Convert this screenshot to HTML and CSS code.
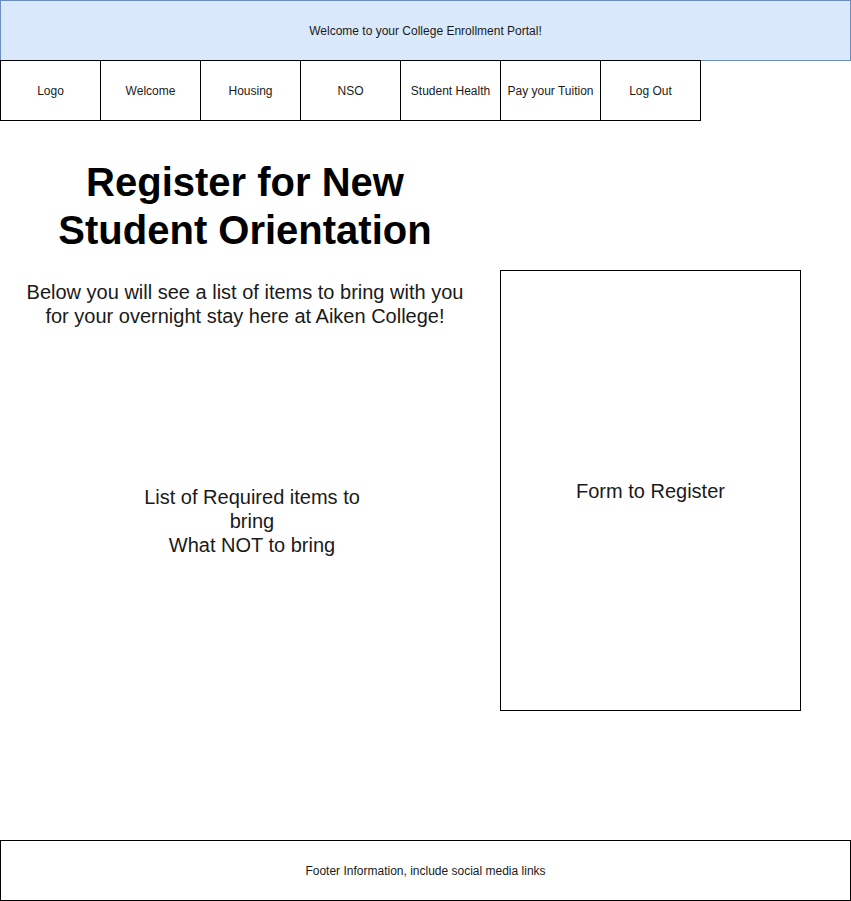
FILE: index.html
```html
<!DOCTYPE html>
<html lang="en">
<head>
<meta charset="utf-8">
<title>College Enrollment Portal</title>
<link rel="stylesheet" href="styles.css">
</head>
<body>
<header class="banner">Welcome to your College Enrollment Portal!</header>
<nav class="nav">
  <div class="nav-item">Logo</div>
  <div class="nav-item">Welcome</div>
  <div class="nav-item">Housing</div>
  <div class="nav-item">NSO</div>
  <div class="nav-item">Student Health</div>
  <div class="nav-item">Pay your Tuition</div>
  <div class="nav-item">Log Out</div>
</nav>
<main class="main">
  <section class="left">
    <h1 class="title">Register for New<br>Student Orientation</h1>
    <p class="intro">Below you will see a list of items to bring with you<br>for your overnight stay here at Aiken College!</p>
    <p class="list">List of Required items to bring<br>What NOT to bring</p>
  </section>
  <section class="form-box">Form to Register</section>
</main>
<footer class="footer">Footer Information, include social media links</footer>
</body>
</html>
```

FILE: styles.css
```css
* { box-sizing: border-box; }
html, body {
  margin: 0;
  padding: 0;
  background: #fff;
}
body {
  width: 851px;
  font-family: "Liberation Sans", Arial, sans-serif;
  color: #1a1a1a;
}
.banner {
  height: 61px;
  background: #dae8fc;
  border: 1px solid #6c8ebf;
  display: flex;
  align-items: center;
  justify-content: center;
  font-size: 12px;
}
.nav {
  display: flex;
  margin-top: -1px;
  position: relative;
}
.nav-item {
  width: 101px;
  height: 61px;
  margin-right: -1px;
  border: 1px solid #000;
  background: #fff;
  display: flex;
  align-items: center;
  justify-content: center;
  font-size: 12px;
  white-space: nowrap;
}
.main {
  height: 719px;
  display: grid;
  grid-template-columns: 490px 301px;
  column-gap: 10px;
  align-items: start;
}
.left {
  padding-top: 37px;
}
.title {
  margin: 0;
  font-size: 40px;
  line-height: 48px;
  font-weight: bold;
  text-align: center;
  color: #000;
}
.intro {
  margin: 26px 0 0;
  font-size: 20px;
  line-height: 24px;
  text-align: center;
}
.list {
  margin: 157px 0 0 137px;
  width: 230px;
  font-size: 20px;
  line-height: 24px;
  text-align: center;
}
.form-box {
  margin-top: 149px;
  height: 441px;
  border: 1px solid #000;
  display: flex;
  align-items: center;
  justify-content: center;
  font-size: 20px;
  line-height: 24px;
}
.footer {
  height: 61px;
  border: 1px solid #000;
  display: flex;
  align-items: center;
  justify-content: center;
  font-size: 12px;
}
```
